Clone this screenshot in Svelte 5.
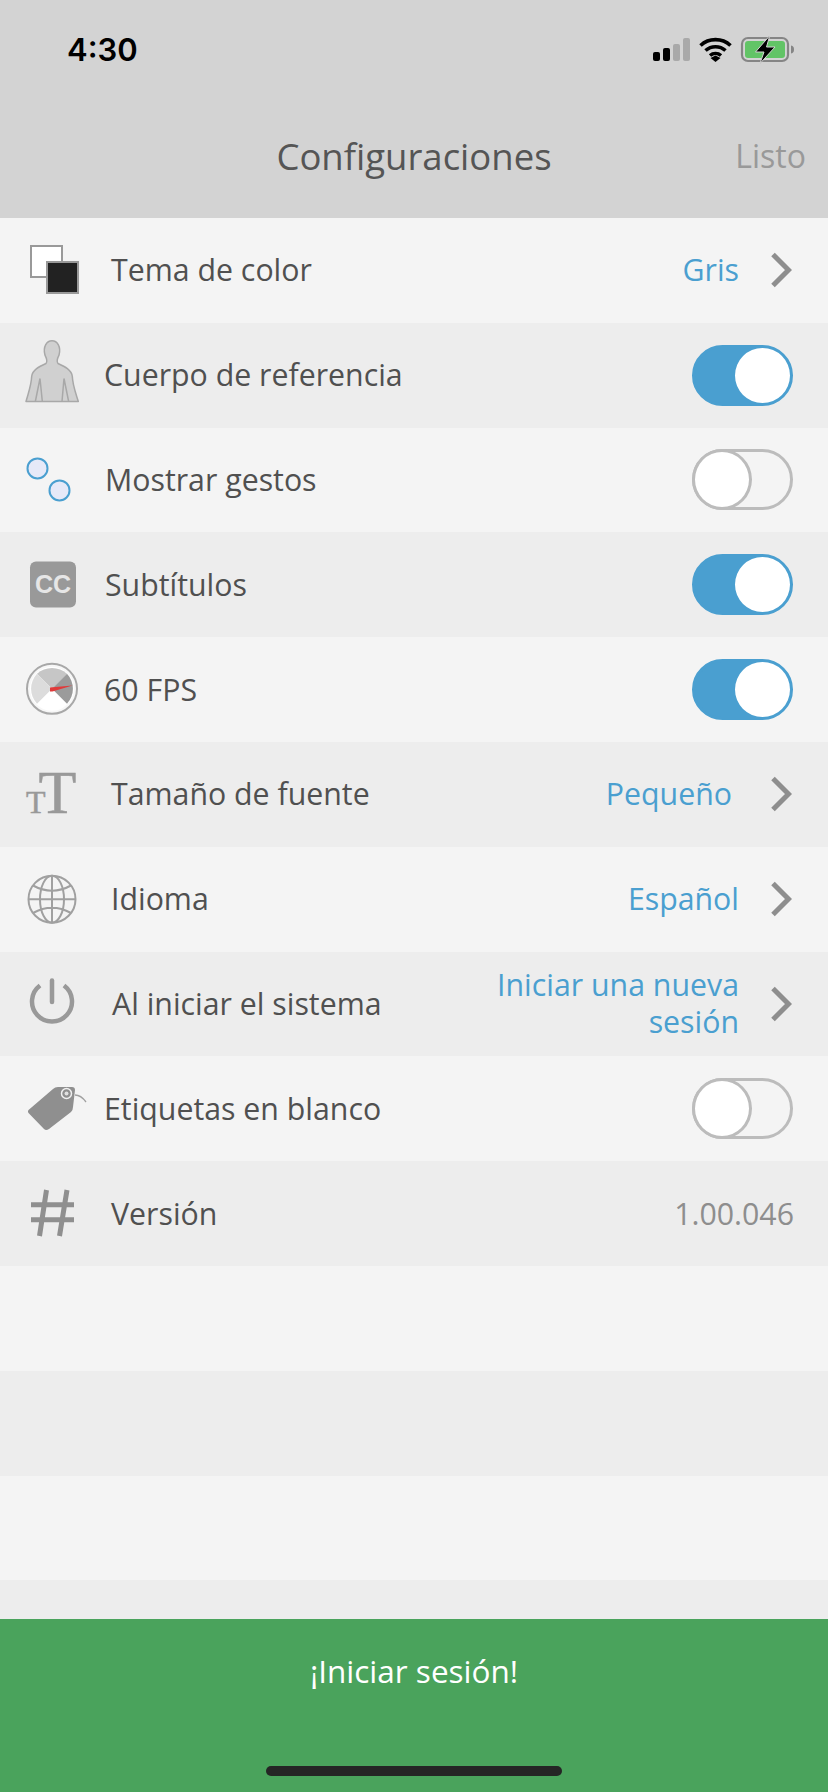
<script>
  const rows = [
    { icon: 'theme', label: 'Tema de color', gap: 21, value: 'Gris', chev: true },
    { icon: 'body', label: 'Cuerpo de referencia', gap: 14, toggle: true },
    { icon: 'gesture', label: 'Mostrar gestos', gap: 15, toggle: false },
    { icon: 'cc', label: 'Subtítulos', gap: 15, toggle: true },
    { icon: 'fps', label: '60 FPS', gap: 14, toggle: true },
    { icon: 'tt', label: 'Tamaño de fuente', gap: 21, value: 'Pequeño', chev: true, shift: 7 },
    { icon: 'globe', label: 'Idioma', gap: 21, value: 'Español', chev: true },
    { icon: 'power', label: 'Al iniciar el sistema', gap: 22, value: 'Iniciar una nueva sesión', chev: true, multi: true },
    { icon: 'tag', label: 'Etiquetas en blanco', gap: 14, toggle: false },
    { icon: 'hash', label: 'Versión', gap: 21, version: '1.00.046' },
    {}, {}, {}, {}
  ];
</script>

<div class="page">
  <header class="top">
    <div class="status">
      <span class="time">4:30</span>
      <svg class="sys" width="142" height="28" viewBox="653 36 142 28">
        <rect x="653" y="52" width="7" height="9" rx="2" fill="#000" />
        <rect x="663" y="48" width="7" height="13" rx="2" fill="#000" />
        <rect x="673" y="44" width="7" height="17" rx="2" fill="#a9a9a9" />
        <rect x="683" y="38" width="7" height="23" rx="2" fill="#a9a9a9" />
        <path d="M700.500 45.500a22 22 0 0 1 30 0M705.500 50.500a15 15 0 0 1 20 0M710 55.500a8.500 8.500 0 0 1 11 0" fill="none" stroke="#000" stroke-width="3.600" />
        <path d="M710.500 58l5-2.500 5 2.500-5 4z" fill="#000" />
        <rect x="742" y="38" width="46" height="23" rx="6" fill="none" stroke="#858585" stroke-width="2.200" />
        <rect x="745" y="41" width="40" height="17" rx="3" fill="#62c466" />
        <path d="M791 45.500c2.500.5 3 2 3 4s-.5 3.500-3 4z" fill="#858585" />
        <path d="M769 36.500L755.500 52h8.500l-4 11.500L775 47h-8.500l3-10.500z" fill="#000" stroke="#d3d3d3" stroke-width="1" />
      </svg>
    </div>
    <div class="bar">
      <h1>Configuraciones</h1>
      <span class="done">Listo</span>
    </div>
  </header>

  <main class="list">
    {#each rows as r}
      <div class="row">
        {#if r.icon}
          <svg class="ic" width="90" height="105" viewBox="0 0 90 105">
            {#if r.icon === 'theme'}
              <rect x="31" y="28" width="31" height="31" fill="#fff" stroke="#999" stroke-width="2" />
              <rect x="47" y="44" width="31" height="31" fill="#222" stroke="#999" stroke-width="2" />
            {:else if r.icon === 'body'}
              <g transform="translate(0 -107.800) scale(0.3333)" stroke="#a8a8a8" stroke-width="4.500" fill="#d0d0d0">
                <path d="M78 559C86 530 94 510 95 484 97 464 118 454 138 445 142 441 141 432 135 420 128 395 140 377 156 377 172 377 184 395 177 420 171 432 170 441 174 445 194 454 215 464 217 484 218 510 226 530 235 559Z" stroke-linejoin="round" />
                <path d="M120 490L106 559M120 490L127 559M192 490L206 559M192 490L186 559" fill="none" />
              </g>
            {:else if r.icon === 'gesture'}
              <circle cx="37.500" cy="40.400" r="10" fill="#e6e9f8" stroke="#4a9fd0" stroke-width="2" />
              <circle cx="59.500" cy="62.400" r="10" fill="#e6e9f8" stroke="#4a9fd0" stroke-width="2" />
            {:else if r.icon === 'cc'}
              <rect x="30" y="29.600" width="46" height="46" rx="6" fill="#999" />
              <text x="53" y="61" text-anchor="middle" class="cct">CC</text>
            {:else if r.icon === 'fps'}
              <circle cx="52" cy="51.800" r="25" fill="#f7f7f7" stroke="#a8a8a8" stroke-width="2" />
              <circle cx="52" cy="51.800" r="22" fill="#fff" />
              <path d="M52 51.800L37 36.800A22 22 0 0 1 67 36.800Z" fill="#c6c6c6" />
              <path d="M52 51.800L37 36.800A22 22 0 0 0 37 66.800Z" fill="#dcdcdc" />
              <path d="M52 51.800L67 36.800A22 22 0 0 1 67 66.800Z" fill="#9b9b9b" />
              <path d="M50 50.500L72.500 48.500 52.500 54.500 50 54.500Z" fill="#e03a3a" />
            {:else if r.icon === 'tt'}
              <text x="26" y="71" class="tt"><tspan class="ts">T</tspan><tspan class="tb" dx="-7">T</tspan></text>
            {:else if r.icon === 'globe'}
              <g fill="none" stroke="#a0a0a0" stroke-width="2">
                <circle cx="52" cy="52.200" r="23.500" />
                <ellipse cx="52" cy="52.200" rx="12" ry="23.500" />
                <path d="M52 28.700V75.700M28.500 52.200H75.500M33 38.500Q52 49 71 38.500M33 66Q52 55.500 71 66" />
              </g>
            {:else if r.icon === 'power'}
              <path d="M40 34.500A20 20 0 1 0 64 34.500" fill="none" stroke="#999" stroke-width="4.500" />
              <path d="M52 29.500V51" fill="none" stroke="#999" stroke-width="4.500" stroke-linecap="round" />
            {:else if r.icon === 'tag'}
              <path d="M28.500 54L53 33Q55 31 58 31L72 31Q75 31 75 34L73 51Q73 54 71 56L49 73Q46 75 44 73L29.500 58Q27 56 28.500 54Z" fill="#8f8f8f" />
              <circle cx="66.500" cy="37.500" r="5" fill="#8f8f8f" stroke="#f0f0f0" stroke-width="1.500" />
              <circle cx="66.500" cy="37.500" r="2" fill="#e0e0e0" />
              <path d="M75 39Q81 39 86 46" fill="none" stroke="#a0a0a0" stroke-width="1.300" />
            {:else if r.icon === 'hash'}
              <path d="M31 43.800H74M31 58.800H74M46.500 29L39.500 75M67 29L59.500 75" fill="none" stroke="#8f8f8f" stroke-width="5" />
            {/if}
          </svg>
          <span class="label" style="margin-left: {r.gap}px">{r.label}</span>
        {/if}
        {#if r.value}
          <span class="value" class:multi={r.multi} style="margin-right: {r.shift ?? 0}px">{r.value}</span>
        {/if}
        {#if r.chev}
          <svg class="chev" width="22" height="36" viewBox="0 0 22 36">
            <path d="M3 2.500L18.500 18 3 33.500" fill="none" stroke="#8e8e8e" stroke-width="5" />
          </svg>
        {/if}
        {#if r.toggle !== undefined}
          <span class="toggle" class:on={r.toggle}><span class="knob"></span></span>
        {/if}
        {#if r.version}
          <span class="version">{r.version}</span>
        {/if}
      </div>
    {/each}
  </main>

  <footer class="foot">
    <span class="cta">¡Iniciar sesión!</span>
    <span class="home"></span>
  </footer>
</div>

<style>
  :global(body) {
    margin: 0;
    background: #f4f4f4;
  }
  .page {
    width: 828px;
    height: 1792px;
    display: flex;
    flex-direction: column;
    overflow: hidden;
    font-family: "Open Sans", "Noto Sans", sans-serif;
    color: #505050;
  }
  .top {
    flex: none;
    height: 218px;
    box-sizing: border-box;
    background: #d3d3d3;
    display: flex;
    flex-direction: column;
  }
  .status {
    height: 100px;
    box-sizing: border-box;
    padding: 36px 33px 0 67px;
    display: flex;
    justify-content: space-between;
    align-items: flex-start;
  }
  .time {
    font-family: Inter, "Liberation Sans", sans-serif;
    font-weight: 600;
    font-size: 31px;
    line-height: 28px;
    color: #000;
  }
  .sys {
    display: block;
  }
  .bar {
    flex: 1;
    display: flex;
    align-items: center;
    justify-content: center;
    position: relative;
    padding-bottom: 6px;
  }
  h1 {
    margin: 0;
    font-size: 36.500px;
    font-weight: 400;
    color: #555;
  }
  .done {
    position: absolute;
    right: 22px;
    top: 36px;
    font-size: 32px;
    line-height: 40px;
    color: #999;
  }
  .list {
    flex: 1;
    min-height: 0;
    overflow: hidden;
  }
  .row {
    height: 104.8px;
    display: flex;
    align-items: center;
    padding-right: 35px;
    background: #f4f4f4;
  }
  .row:nth-child(even) {
    background: #ededed;
  }
  .ic {
    flex: none;
    display: block;
    overflow: visible;
  }
  .label {
    flex: 1;
    font-size: 30.300px;
    margin-bottom: 1px;
    color: #505050;
    white-space: nowrap;
  }
  .value {
    font-size: 30.300px;
    margin-bottom: 1px;
    color: #4a9fd0;
    text-align: right;
  }
  .value.multi {
    width: 290px;
    line-height: 37.500px;
  }
  .chev {
    flex: none;
    margin-left: 31px;
    margin-right: 1px;
    display: block;
  }
  .version {
    font-size: 30.300px;
    margin-bottom: 1px;
    margin-right: -1px;
    color: #8e8e8e;
  }
  .toggle {
    flex: none;
    box-sizing: border-box;
    width: 101px;
    height: 61px;
    border-radius: 31px;
    border: 3px solid #bcbcbc;
    display: flex;
    align-items: center;
    justify-content: flex-start;
  }
  .toggle.on {
    background: #4a9fd0;
    border-color: #4a9fd0;
    justify-content: flex-end;
  }
  .knob {
    box-sizing: border-box;
    width: 60px;
    height: 61px;
    margin: -3px;
    border-radius: 50%;
    background: #fff;
    border: 3px solid #bcbcbc;
  }
  .toggle.on .knob {
    width: 55px;
    height: 55px;
    margin: 0;
    border: 0;
  }
  .foot {
    flex: none;
    height: 173px;
    background: #4aa35c;
    display: flex;
    flex-direction: column;
    align-items: center;
  }
  .cta {
    margin-top: 32px;
    font-size: 31.500px;
    line-height: 40px;
    color: #fff;
  }
  .home {
    margin-top: 75px;
    width: 296px;
    height: 10px;
    border-radius: 5px;
    background: #252525;
  }
  .cct {
    font-family: "Liberation Sans", sans-serif;
    font-weight: 700;
    font-size: 25px;
    fill: #e6e6e6;
  }
  .tt {
    font-family: "Liberation Serif", serif;
    fill: #999;
    stroke: #999;
    stroke-width: 0.500px;
  }
  .ts { font-size: 32px; }
  .tb { font-size: 62px; }
</style>
